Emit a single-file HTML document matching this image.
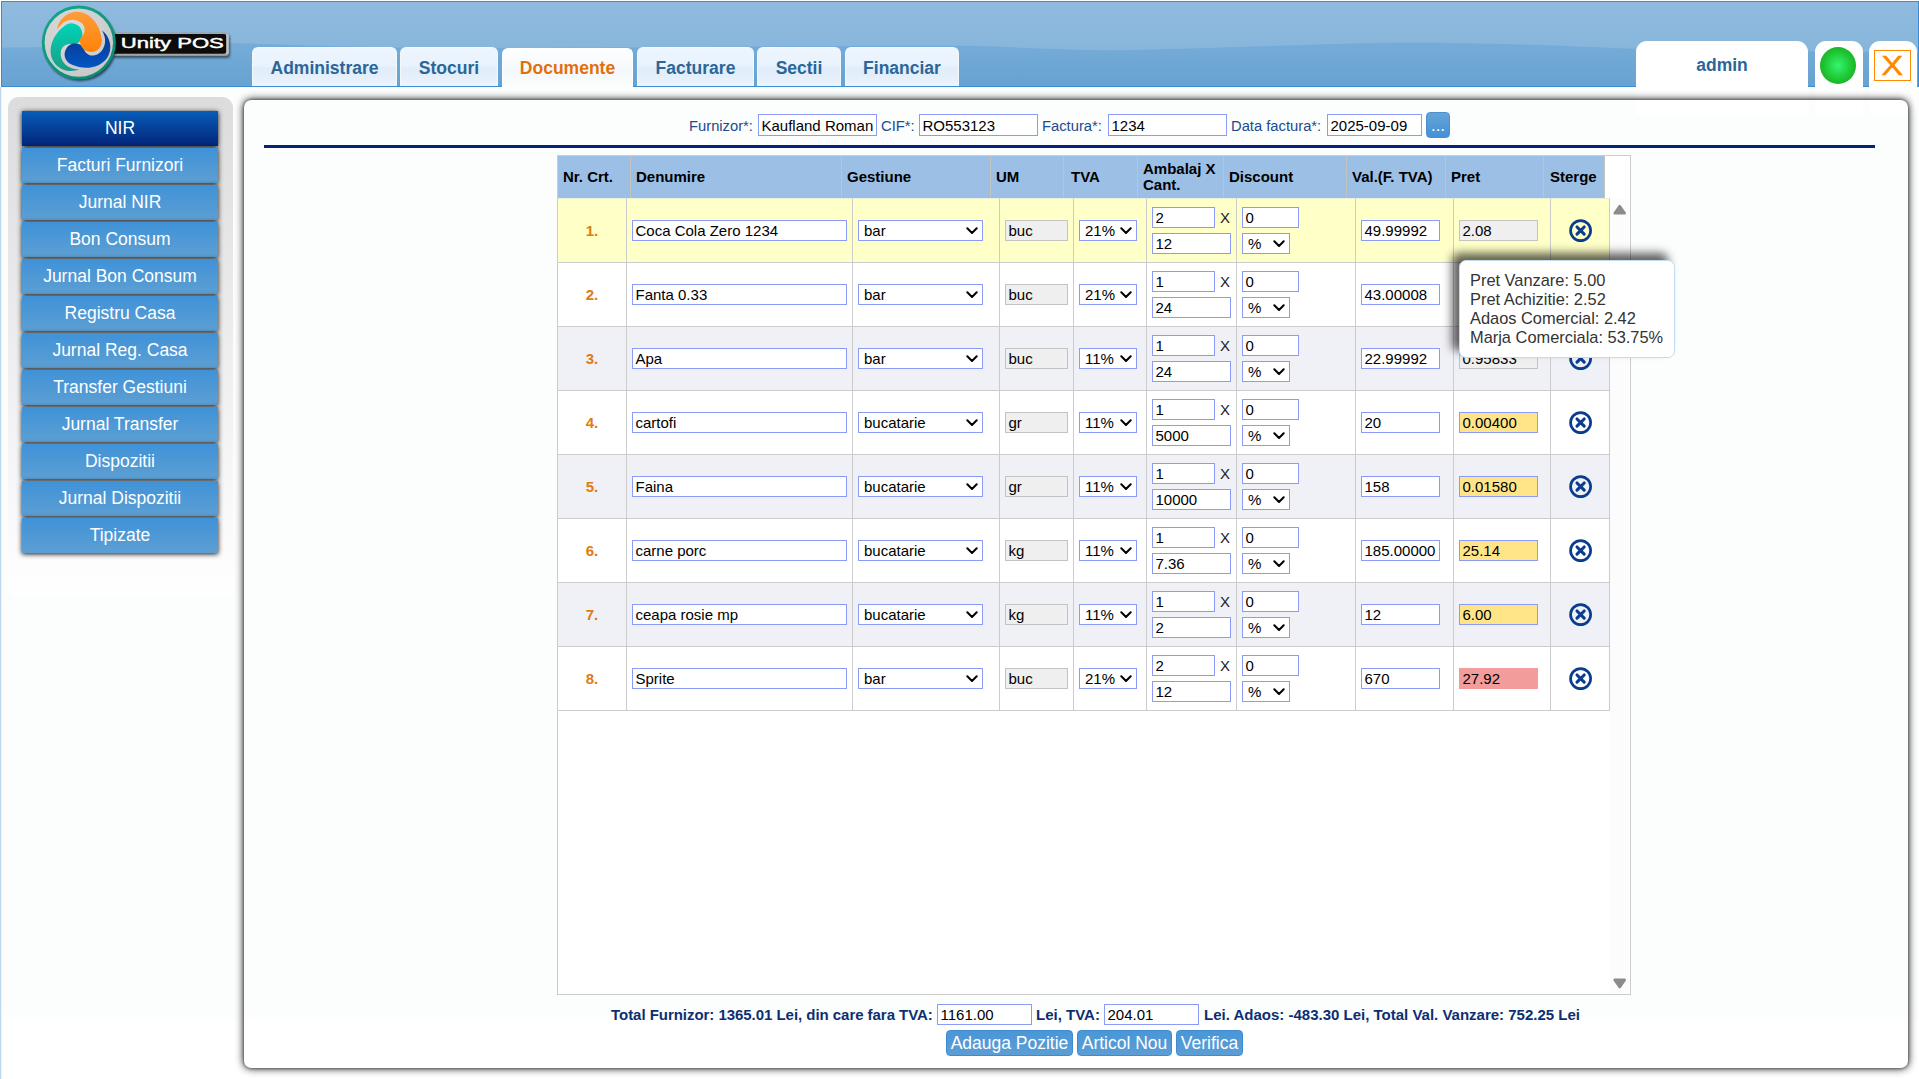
<!DOCTYPE html>
<html lang="ro">
<head>
<meta charset="utf-8">
<title>Unity POS - NIR</title>
<style>
html,body{margin:0;padding:0;}
body{width:1919px;height:1079px;overflow:hidden;position:relative;background:linear-gradient(to bottom,#fcfdfd 0,#fcfdfd 1012px,#fff 1022px);font-family:"Liberation Sans",Arial,sans-serif;font-size:15px;color:#000;}
.abs{position:absolute;}
#leftline{position:absolute;left:0;top:87px;width:2px;height:992px;background:linear-gradient(to right,#bdd7ec 0,#bdd7ec 50%,#eef5fa 50%,#eef5fa 100%);}
#hdr{position:absolute;left:1px;top:1px;width:1918px;height:86px;box-sizing:border-box;border:1px solid #3a8dd4;background:#8fbbde;overflow:hidden;}
#hdr svg.bg{position:absolute;left:0;top:0;}
.tab{position:absolute;top:47px;height:39px;box-sizing:border-box;border-radius:6px 6px 0 0;text-align:center;font-weight:bold;font-size:17.5px;line-height:40px;color:#2b6699;
 background:linear-gradient(to bottom,#edf5fd 0%,#e9f3fd 48%,#e0edfa 52%,#e4effb 75%,#edf5fd 100%);border:1px solid #f3f8fd;border-bottom:none;}
.tab.act{top:48px;height:40px;background:linear-gradient(to bottom,#fdfeff,#f5f8fb 60%,#fcfdfd);color:#e2700a;border-color:#fff;line-height:38px;}
.wbox{position:absolute;top:41px;height:74px;background:#fff;border-radius:11px 11px 0 0;}
#admin{left:1636px;width:172px;text-align:center;font-weight:bold;font-size:17.5px;color:#2b6699;line-height:49px;}
#gbox{left:1815px;width:48px;}
#xbox{left:1869px;width:47.8px;}
#gdot{position:absolute;left:1820px;top:47px;width:36px;height:37px;border-radius:50%;background:radial-gradient(ellipse at 50% 50%,#34f570 0%,#20c836 50%,#119d0f 100%);}
#xbtn{position:absolute;left:1874px;top:50px;width:37px;height:31px;box-sizing:border-box;border:1px solid #ff8a00;color:#ff8a00;font-size:27.5px;line-height:30px;text-align:center;}
#xbtn span{display:inline-block;transform:scaleX(1.19);-webkit-text-stroke:0.5px #ff8a00;}
#side{position:absolute;left:8px;top:97px;width:225px;height:500px;border-radius:11px;background:linear-gradient(to bottom,#dcdcdc 0%,#ffffff 100%);}
.sb{position:absolute;left:22px;width:196px;height:35px;line-height:34px;text-align:center;color:#fff;font-size:17.5px;background:linear-gradient(to bottom,#3f92d8,#5d9fd3);box-shadow:0 1px 5px rgba(0,0,0,.95);}
.sb.act{background:linear-gradient(to bottom,#075db8,#03257a);}
#panel{position:absolute;left:244px;top:100px;width:1664px;height:968px;border-radius:7px;box-shadow:0 0 8px #000,0 0 3px rgba(0,0,0,.45);}
.lbl{position:absolute;top:118px;line-height:17px;font-size:14.75px;color:#1d4b8f;white-space:pre;}
.inp{position:absolute;box-sizing:border-box;height:21px;border:1px solid #8c9bf7;background:#fff;padding:1px 0 0 2.5px;line-height:17px;font-size:15px;white-space:pre;overflow:hidden;color:#000;}
.inp.dis{background:#efefef;border-color:#c3c3c3;}
.btn{position:absolute;box-sizing:border-box;border-radius:4px;background:linear-gradient(to bottom,#4a96d8,#5b9ed4);color:#fff;text-align:center;border:1px solid #3f8bd0;}
#hr{position:absolute;left:264px;top:145px;width:1611px;height:3px;background:#03247a;}
#tbox{position:absolute;left:557px;top:155px;width:1074px;height:840px;box-sizing:border-box;border:1px solid #ccc;background:#fff;}
table{border-collapse:separate;border-spacing:0;table-layout:fixed;}
#th{position:absolute;left:558px;top:156px;width:1047px;height:42px;}
#th td{background:#9cbfe6;border-right:1px solid #c4c4bd;padding:0 0 0 5px;font-weight:bold;font-size:15px;line-height:16px;height:42px;box-sizing:border-box;vertical-align:middle;padding-bottom:1px;}
#tb{position:absolute;left:558px;top:198px;width:1052px;}
#tb td{padding:0;height:64px;box-sizing:border-box;border-right:1px solid #ccc;border-bottom:1px solid #ccc;position:relative;background:#fff;}
#tb tr.hl td{background:#ffffc8;}
#tb tr:first-child td{height:65px;border-top:1px solid #ecefd9;}
#tb tr.alt td{background:#f0f0f7;}
#tb td>*{position:absolute;}
td.c1{text-align:center;color:#e07b10;font-weight:bold;line-height:63px;}
.one{top:21px;}
.i-den{left:5px;top:21px;width:215px;}
.s-gest{left:5px;top:21px;width:125px;}
.i-um{left:5px;top:21px;width:63px;}
.s-tva{left:5px;top:21px;width:58px;}
.i-amb{left:5px;top:8px;width:63px;}
.i-cant{left:5px;top:34px;width:79px;}
.x{left:73px;top:10px;font-size:15px;line-height:17px;color:#222;}
.i-disc{left:5px;top:8px;width:57px;}
.s-pct{left:5px;top:34px;width:48px;}
.i-val{left:5px;top:21px;width:79px;}
.i-pret{left:5px;top:21px;width:79px;}
.i-pret.pg{background:#efefef;border-color:#c3c3c3;}
.i-pret.py{background:#ffe588;}
.i-pret.pr{background:#f29c9c;border-color:#f29c9c;}
.sel{box-sizing:border-box;height:21px;border:1px solid #8c9bf7;background:#fff;line-height:17px;padding:1px 0 0 5px;font-size:15px;}
.sel .chev{position:absolute;right:4px;top:6px;}
.del{left:17px;top:19px;}
#sbar{position:absolute;left:1610px;top:199px;width:19px;height:795px;background:#fcfcfc;}
#tip{position:absolute;left:1459px;top:260px;width:216px;height:98px;box-sizing:border-box;border:1px solid #c3dcef;border-radius:7px;background:#fff;box-shadow:-7px -7px 10px rgba(0,0,0,.62);padding:9.5px 0 0 10px;font-size:16.4px;line-height:19px;color:#333;white-space:pre;}
.ft{position:absolute;top:1006px;line-height:17px;font-size:15px;font-weight:bold;color:#0d2f72;white-space:pre;}
.inp.tp{height:22px;padding-top:2px;}
#th td:nth-child(5){padding-left:7px;}
#th td:nth-child(10){padding-left:6px;}
</style>
</head>
<body>
<div id="leftline"></div>
<div id="hdr">
<svg class="bg" width="1916" height="84" viewBox="2 2 1916 84" preserveAspectRatio="none">
<defs>
<linearGradient id="g1" x1="0" y1="0" x2="0" y2="1"><stop offset="0" stop-color="#90bbdf"/><stop offset="1" stop-color="#86b4da"/></linearGradient>
<linearGradient id="g2" x1="0" y1="0" x2="0" y2="1"><stop offset="0" stop-color="#76acd7"/><stop offset="1" stop-color="#67a2d2"/></linearGradient>
</defs>
<rect x="0" y="0" width="1919" height="60" fill="url(#g1)"/>
<path d="M0,47.6 C6.7,47.53 18.3,47.77 40,47.2 C61.7,46.63 98.0,44.85 130,44.2 C162.0,43.55 202.8,43.10 232,43.3 C261.2,43.50 277.0,44.72 305,45.4 C333.0,46.08 367.5,46.97 400,47.4 C432.5,47.83 463.3,47.98 500,48 C536.7,48.02 570.0,47.78 620,47.5 C670.0,47.22 743.3,46.58 800,46.3 C856.7,46.02 920.0,45.43 960,45.8 C1000.0,46.17 1015.0,47.75 1040,48.5 C1065.0,49.25 1085.0,50.30 1110,50.3 C1135.0,50.30 1161.7,49.25 1190,48.5 C1218.3,47.75 1253.3,46.63 1280,45.8 C1306.7,44.97 1326.0,44.05 1350,43.5 C1374.0,42.95 1395.7,42.33 1424,42.5 C1452.3,42.67 1484.0,43.42 1520,44.5 C1556.0,45.58 1605.0,47.95 1640,49 C1675.0,50.05 1701.7,50.38 1730,50.8 C1758.3,51.22 1778.5,51.30 1810,51.5 C1841.5,51.70 1900.8,51.92 1919,52 L1919,87 L0,87 Z" fill="url(#g2)"/>
</svg>
</div>
<div class="tab" style="left:252px;width:145px">Administrare</div>
<div class="tab" style="left:400px;width:98px">Stocuri</div>
<div class="tab act" style="left:502px;width:131px">Documente</div>
<div class="tab" style="left:637px;width:117px">Facturare</div>
<div class="tab" style="left:757px;width:84px">Sectii</div>
<div class="tab" style="left:845px;width:114px">Financiar</div>
<div class="wbox" id="admin">admin</div>
<div class="wbox" id="gbox"></div>
<div class="wbox" id="xbox"></div>
<div id="gdot"></div>
<div id="xbtn"><span>X</span></div>
<svg id="logo" class="abs" style="left:36px;top:0px" width="200" height="90" viewBox="0 0 200 90">
<defs>
<radialGradient id="lgd" cx="0.4" cy="0.35" r="0.75"><stop offset="0" stop-color="#dcdcdc"/><stop offset="1" stop-color="#c6c6c6"/></radialGradient>
<linearGradient id="lgo" gradientUnits="userSpaceOnUse" x1="0" y1="-30" x2="0" y2="9"><stop offset="0" stop-color="#ff9c3a"/><stop offset="1" stop-color="#ff8206"/></linearGradient>
<linearGradient id="lgt" gradientUnits="userSpaceOnUse" x1="0" y1="-20" x2="0" y2="28"><stop offset="0" stop-color="#00d6b8"/><stop offset="1" stop-color="#1b9a84"/></linearGradient>
<linearGradient id="lgb" gradientUnits="userSpaceOnUse" x1="0" y1="0" x2="0" y2="27"><stop offset="0" stop-color="#0a409a"/><stop offset="1" stop-color="#0058cc"/></linearGradient>
<linearGradient id="lgr" x1="0.2" y1="0" x2="0.8" y2="1"><stop offset="0" stop-color="#13a58c"/><stop offset="1" stop-color="#0c8a72"/></linearGradient>
<linearGradient id="lgs" x1="0" y1="0" x2="0" y2="1"><stop offset="0" stop-color="#9a9a9a"/><stop offset="0.15" stop-color="#c8c8c8"/><stop offset="0.85" stop-color="#c4c4c4"/><stop offset="1" stop-color="#8e8e8e"/></linearGradient>
<filter id="lsh" x="-20%" y="-20%" width="140%" height="140%"><feGaussianBlur stdDeviation="1.2"/></filter>
</defs>
<rect x="77" y="35" width="117" height="23" rx="3" fill="#111" opacity="0.55" filter="url(#lsh)"/>
<rect x="74" y="32.4" width="118.8" height="23.6" rx="3.5" fill="url(#lgs)"/>
<rect x="74" y="34" width="116.2" height="19.8" rx="2" fill="#0c0c0c"/>
<text x="84.8" y="48.1" font-family="Liberation Sans, Arial, sans-serif" font-size="15.2" fill="#fff" stroke="#fff" stroke-width="0.45" textLength="103" lengthAdjust="spacingAndGlyphs">Unity POS</text>
<circle cx="44.3" cy="44.8" r="36.3" fill="#0a1f2a" opacity="0.75" filter="url(#lsh)"/>
<circle cx="42.8" cy="42.6" r="35.6" fill="url(#lgd)" stroke="url(#lgr)" stroke-width="2.8"/>
<g transform="translate(43.3 43.2) scale(1.05)">
<path d="M-0.09 24.90 C-8.56 28.47 -19.53 25.74 -24.43 17.59 C-30.87 6.88 -25.73 -7.87 -14.40 -16.20 A10.4 10.4 0 1 1 -4.37 1.46 C-9.43 -0.17 -15.61 1.21 -17.40 6.96 C-19.11 13.82 -14.99 20.68 -8.32 23.43 C-5.73 24.44 -2.56 24.87 -0.09 24.90 Z" fill="url(#lgt)"/>
<path d="M21.61 -12.38 C28.94 -6.83 32.06 4.05 27.45 12.36 C21.39 23.29 6.05 26.22 -6.83 20.57 A10.4 10.4 0 1 1 3.45 3.06 C4.57 8.25 8.85 12.91 14.73 11.59 C21.52 9.64 25.40 2.65 24.45 -4.51 C24.03 -7.26 22.82 -10.22 21.61 -12.38 Z" fill="url(#lgb)"/>
<path d="M-21.30 -12.90 C-20.00 -22.00 -12.00 -30.00 -2.50 -30.00 C10.00 -30.00 20.00 -18.00 21.30 -4.00 A10.4 10.4 0 1 1 1.00 -4.50 C5.00 -8.00 7.00 -14.00 3.00 -18.50 C-2.00 -23.50 -10.00 -23.50 -15.80 -19.20 C-18.00 -17.50 -20.00 -15.00 -21.30 -12.90 Z" fill="url(#lgo)"/>
</g>
</svg>
<div id="side"></div>
<div class="sb act" style="top:111px">NIR</div>
<div class="sb" style="top:148px">Facturi Furnizori</div>
<div class="sb" style="top:185px">Jurnal NIR</div>
<div class="sb" style="top:222px">Bon Consum</div>
<div class="sb" style="top:259px">Jurnal Bon Consum</div>
<div class="sb" style="top:296px">Registru Casa</div>
<div class="sb" style="top:333px">Jurnal Reg. Casa</div>
<div class="sb" style="top:370px">Transfer Gestiuni</div>
<div class="sb" style="top:407px">Jurnal Transfer</div>
<div class="sb" style="top:444px">Dispozitii</div>
<div class="sb" style="top:481px">Jurnal Dispozitii</div>
<div class="sb" style="top:518px">Tipizate</div>
<div id="panel"></div>
<span class="lbl" style="left:689px">Furnizor*:</span>
<div class="inp tp" style="left:758px;top:114px;width:119px">Kaufland Roman</div>
<span class="lbl" style="left:881px">CIF*:</span>
<div class="inp tp" style="left:919px;top:114px;width:119px">RO553123</div>
<span class="lbl" style="left:1042px">Factura*:</span>
<div class="inp tp" style="left:1108px;top:114px;width:119px">1234</div>
<span class="lbl" style="left:1231px">Data factura*:</span>
<div class="inp tp" style="left:1327px;top:114px;width:95px">2025-09-09</div>
<div class="btn" style="left:1426px;top:112px;width:24px;height:26px;font-size:17px;line-height:25px;background:linear-gradient(to bottom,#66a4d6,#4590d6);border-color:#4a90d0">...</div>
<div id="hr"></div>
<div id="tbox"></div>
<table id="th"><colgroup><col style="width:73px"><col style="width:211px"><col style="width:149px"><col style="width:73px"><col style="width:74px"><col style="width:86px"><col style="width:123px"><col style="width:99px"><col style="width:98px"><col style="width:61px"></colgroup>
<tr><td>Nr. Crt.</td><td>Denumire</td><td>Gestiune</td><td>UM</td><td>TVA</td><td>Ambalaj X Cant.</td><td>Discount</td><td>Val.(F. TVA)</td><td>Pret</td><td>Sterge</td></tr></table>
<table id="tb"><colgroup><col style="width:69px"><col style="width:226px"><col style="width:147px"><col style="width:74px"><col style="width:73px"><col style="width:90px"><col style="width:119px"><col style="width:98px"><col style="width:97px"><col style="width:59px"></colgroup>
<tr class="hl">
<td class="c1">1.</td>
<td class="c2"><div class="inp i-den">Coca Cola Zero 1234</div></td>
<td class="c3"><div class="sel s-gest"><span>bar</span><svg class="chev" viewBox="0 0 12 8" width="12" height="8"><path d="M1.3 1.3 L6 6 L10.7 1.3" fill="none" stroke="#000" stroke-width="2" stroke-linecap="round" stroke-linejoin="round"/></svg></div></td>
<td class="c4"><div class="inp dis i-um">buc</div></td>
<td class="c5"><div class="sel s-tva"><span>21%</span><svg class="chev" viewBox="0 0 12 8" width="12" height="8"><path d="M1.3 1.3 L6 6 L10.7 1.3" fill="none" stroke="#000" stroke-width="2" stroke-linecap="round" stroke-linejoin="round"/></svg></div></td>
<td class="c6"><div class="inp i-amb">2</div><span class="x">X</span><div class="inp i-cant">12</div></td>
<td class="c7"><div class="inp i-disc">0</div><div class="sel s-pct"><span>%</span><svg class="chev" viewBox="0 0 12 8" width="12" height="8"><path d="M1.3 1.3 L6 6 L10.7 1.3" fill="none" stroke="#000" stroke-width="2" stroke-linecap="round" stroke-linejoin="round"/></svg></div></td>
<td class="c8"><div class="inp i-val">49.99992</div></td>
<td class="c9"><div class="inp i-pret pg">2.08</div></td>
<td class="c10"><svg class="del" viewBox="0 0 26 26" width="26" height="26"><circle cx="12.6" cy="12.6" r="10.05" fill="none" stroke="#0a3d8f" stroke-width="2.7"/><path d="M9 9 L16.2 16.2 M16.2 9 L9 16.2" stroke="#0a3d8f" stroke-width="3.1" stroke-linecap="round"/></svg></td>
</tr>
<tr class="">
<td class="c1">2.</td>
<td class="c2"><div class="inp i-den">Fanta 0.33</div></td>
<td class="c3"><div class="sel s-gest"><span>bar</span><svg class="chev" viewBox="0 0 12 8" width="12" height="8"><path d="M1.3 1.3 L6 6 L10.7 1.3" fill="none" stroke="#000" stroke-width="2" stroke-linecap="round" stroke-linejoin="round"/></svg></div></td>
<td class="c4"><div class="inp dis i-um">buc</div></td>
<td class="c5"><div class="sel s-tva"><span>21%</span><svg class="chev" viewBox="0 0 12 8" width="12" height="8"><path d="M1.3 1.3 L6 6 L10.7 1.3" fill="none" stroke="#000" stroke-width="2" stroke-linecap="round" stroke-linejoin="round"/></svg></div></td>
<td class="c6"><div class="inp i-amb">1</div><span class="x">X</span><div class="inp i-cant">24</div></td>
<td class="c7"><div class="inp i-disc">0</div><div class="sel s-pct"><span>%</span><svg class="chev" viewBox="0 0 12 8" width="12" height="8"><path d="M1.3 1.3 L6 6 L10.7 1.3" fill="none" stroke="#000" stroke-width="2" stroke-linecap="round" stroke-linejoin="round"/></svg></div></td>
<td class="c8"><div class="inp i-val">43.00008</div></td>
<td class="c9"><div class="inp i-pret pg">2.52</div></td>
<td class="c10"><svg class="del" viewBox="0 0 26 26" width="26" height="26"><circle cx="12.6" cy="12.6" r="10.05" fill="none" stroke="#0a3d8f" stroke-width="2.7"/><path d="M9 9 L16.2 16.2 M16.2 9 L9 16.2" stroke="#0a3d8f" stroke-width="3.1" stroke-linecap="round"/></svg></td>
</tr>
<tr class="alt">
<td class="c1">3.</td>
<td class="c2"><div class="inp i-den">Apa</div></td>
<td class="c3"><div class="sel s-gest"><span>bar</span><svg class="chev" viewBox="0 0 12 8" width="12" height="8"><path d="M1.3 1.3 L6 6 L10.7 1.3" fill="none" stroke="#000" stroke-width="2" stroke-linecap="round" stroke-linejoin="round"/></svg></div></td>
<td class="c4"><div class="inp dis i-um">buc</div></td>
<td class="c5"><div class="sel s-tva"><span>11%</span><svg class="chev" viewBox="0 0 12 8" width="12" height="8"><path d="M1.3 1.3 L6 6 L10.7 1.3" fill="none" stroke="#000" stroke-width="2" stroke-linecap="round" stroke-linejoin="round"/></svg></div></td>
<td class="c6"><div class="inp i-amb">1</div><span class="x">X</span><div class="inp i-cant">24</div></td>
<td class="c7"><div class="inp i-disc">0</div><div class="sel s-pct"><span>%</span><svg class="chev" viewBox="0 0 12 8" width="12" height="8"><path d="M1.3 1.3 L6 6 L10.7 1.3" fill="none" stroke="#000" stroke-width="2" stroke-linecap="round" stroke-linejoin="round"/></svg></div></td>
<td class="c8"><div class="inp i-val">22.99992</div></td>
<td class="c9"><div class="inp i-pret pg">0.95833</div></td>
<td class="c10"><svg class="del" viewBox="0 0 26 26" width="26" height="26"><circle cx="12.6" cy="12.6" r="10.05" fill="none" stroke="#0a3d8f" stroke-width="2.7"/><path d="M9 9 L16.2 16.2 M16.2 9 L9 16.2" stroke="#0a3d8f" stroke-width="3.1" stroke-linecap="round"/></svg></td>
</tr>
<tr class="">
<td class="c1">4.</td>
<td class="c2"><div class="inp i-den">cartofi</div></td>
<td class="c3"><div class="sel s-gest"><span>bucatarie</span><svg class="chev" viewBox="0 0 12 8" width="12" height="8"><path d="M1.3 1.3 L6 6 L10.7 1.3" fill="none" stroke="#000" stroke-width="2" stroke-linecap="round" stroke-linejoin="round"/></svg></div></td>
<td class="c4"><div class="inp dis i-um">gr</div></td>
<td class="c5"><div class="sel s-tva"><span>11%</span><svg class="chev" viewBox="0 0 12 8" width="12" height="8"><path d="M1.3 1.3 L6 6 L10.7 1.3" fill="none" stroke="#000" stroke-width="2" stroke-linecap="round" stroke-linejoin="round"/></svg></div></td>
<td class="c6"><div class="inp i-amb">1</div><span class="x">X</span><div class="inp i-cant">5000</div></td>
<td class="c7"><div class="inp i-disc">0</div><div class="sel s-pct"><span>%</span><svg class="chev" viewBox="0 0 12 8" width="12" height="8"><path d="M1.3 1.3 L6 6 L10.7 1.3" fill="none" stroke="#000" stroke-width="2" stroke-linecap="round" stroke-linejoin="round"/></svg></div></td>
<td class="c8"><div class="inp i-val">20</div></td>
<td class="c9"><div class="inp i-pret py">0.00400</div></td>
<td class="c10"><svg class="del" viewBox="0 0 26 26" width="26" height="26"><circle cx="12.6" cy="12.6" r="10.05" fill="none" stroke="#0a3d8f" stroke-width="2.7"/><path d="M9 9 L16.2 16.2 M16.2 9 L9 16.2" stroke="#0a3d8f" stroke-width="3.1" stroke-linecap="round"/></svg></td>
</tr>
<tr class="alt">
<td class="c1">5.</td>
<td class="c2"><div class="inp i-den">Faina</div></td>
<td class="c3"><div class="sel s-gest"><span>bucatarie</span><svg class="chev" viewBox="0 0 12 8" width="12" height="8"><path d="M1.3 1.3 L6 6 L10.7 1.3" fill="none" stroke="#000" stroke-width="2" stroke-linecap="round" stroke-linejoin="round"/></svg></div></td>
<td class="c4"><div class="inp dis i-um">gr</div></td>
<td class="c5"><div class="sel s-tva"><span>11%</span><svg class="chev" viewBox="0 0 12 8" width="12" height="8"><path d="M1.3 1.3 L6 6 L10.7 1.3" fill="none" stroke="#000" stroke-width="2" stroke-linecap="round" stroke-linejoin="round"/></svg></div></td>
<td class="c6"><div class="inp i-amb">1</div><span class="x">X</span><div class="inp i-cant">10000</div></td>
<td class="c7"><div class="inp i-disc">0</div><div class="sel s-pct"><span>%</span><svg class="chev" viewBox="0 0 12 8" width="12" height="8"><path d="M1.3 1.3 L6 6 L10.7 1.3" fill="none" stroke="#000" stroke-width="2" stroke-linecap="round" stroke-linejoin="round"/></svg></div></td>
<td class="c8"><div class="inp i-val">158</div></td>
<td class="c9"><div class="inp i-pret py">0.01580</div></td>
<td class="c10"><svg class="del" viewBox="0 0 26 26" width="26" height="26"><circle cx="12.6" cy="12.6" r="10.05" fill="none" stroke="#0a3d8f" stroke-width="2.7"/><path d="M9 9 L16.2 16.2 M16.2 9 L9 16.2" stroke="#0a3d8f" stroke-width="3.1" stroke-linecap="round"/></svg></td>
</tr>
<tr class="">
<td class="c1">6.</td>
<td class="c2"><div class="inp i-den">carne porc</div></td>
<td class="c3"><div class="sel s-gest"><span>bucatarie</span><svg class="chev" viewBox="0 0 12 8" width="12" height="8"><path d="M1.3 1.3 L6 6 L10.7 1.3" fill="none" stroke="#000" stroke-width="2" stroke-linecap="round" stroke-linejoin="round"/></svg></div></td>
<td class="c4"><div class="inp dis i-um">kg</div></td>
<td class="c5"><div class="sel s-tva"><span>11%</span><svg class="chev" viewBox="0 0 12 8" width="12" height="8"><path d="M1.3 1.3 L6 6 L10.7 1.3" fill="none" stroke="#000" stroke-width="2" stroke-linecap="round" stroke-linejoin="round"/></svg></div></td>
<td class="c6"><div class="inp i-amb">1</div><span class="x">X</span><div class="inp i-cant">7.36</div></td>
<td class="c7"><div class="inp i-disc">0</div><div class="sel s-pct"><span>%</span><svg class="chev" viewBox="0 0 12 8" width="12" height="8"><path d="M1.3 1.3 L6 6 L10.7 1.3" fill="none" stroke="#000" stroke-width="2" stroke-linecap="round" stroke-linejoin="round"/></svg></div></td>
<td class="c8"><div class="inp i-val">185.00000</div></td>
<td class="c9"><div class="inp i-pret py">25.14</div></td>
<td class="c10"><svg class="del" viewBox="0 0 26 26" width="26" height="26"><circle cx="12.6" cy="12.6" r="10.05" fill="none" stroke="#0a3d8f" stroke-width="2.7"/><path d="M9 9 L16.2 16.2 M16.2 9 L9 16.2" stroke="#0a3d8f" stroke-width="3.1" stroke-linecap="round"/></svg></td>
</tr>
<tr class="alt">
<td class="c1">7.</td>
<td class="c2"><div class="inp i-den">ceapa rosie mp</div></td>
<td class="c3"><div class="sel s-gest"><span>bucatarie</span><svg class="chev" viewBox="0 0 12 8" width="12" height="8"><path d="M1.3 1.3 L6 6 L10.7 1.3" fill="none" stroke="#000" stroke-width="2" stroke-linecap="round" stroke-linejoin="round"/></svg></div></td>
<td class="c4"><div class="inp dis i-um">kg</div></td>
<td class="c5"><div class="sel s-tva"><span>11%</span><svg class="chev" viewBox="0 0 12 8" width="12" height="8"><path d="M1.3 1.3 L6 6 L10.7 1.3" fill="none" stroke="#000" stroke-width="2" stroke-linecap="round" stroke-linejoin="round"/></svg></div></td>
<td class="c6"><div class="inp i-amb">1</div><span class="x">X</span><div class="inp i-cant">2</div></td>
<td class="c7"><div class="inp i-disc">0</div><div class="sel s-pct"><span>%</span><svg class="chev" viewBox="0 0 12 8" width="12" height="8"><path d="M1.3 1.3 L6 6 L10.7 1.3" fill="none" stroke="#000" stroke-width="2" stroke-linecap="round" stroke-linejoin="round"/></svg></div></td>
<td class="c8"><div class="inp i-val">12</div></td>
<td class="c9"><div class="inp i-pret py">6.00</div></td>
<td class="c10"><svg class="del" viewBox="0 0 26 26" width="26" height="26"><circle cx="12.6" cy="12.6" r="10.05" fill="none" stroke="#0a3d8f" stroke-width="2.7"/><path d="M9 9 L16.2 16.2 M16.2 9 L9 16.2" stroke="#0a3d8f" stroke-width="3.1" stroke-linecap="round"/></svg></td>
</tr>
<tr class="">
<td class="c1">8.</td>
<td class="c2"><div class="inp i-den">Sprite</div></td>
<td class="c3"><div class="sel s-gest"><span>bar</span><svg class="chev" viewBox="0 0 12 8" width="12" height="8"><path d="M1.3 1.3 L6 6 L10.7 1.3" fill="none" stroke="#000" stroke-width="2" stroke-linecap="round" stroke-linejoin="round"/></svg></div></td>
<td class="c4"><div class="inp dis i-um">buc</div></td>
<td class="c5"><div class="sel s-tva"><span>21%</span><svg class="chev" viewBox="0 0 12 8" width="12" height="8"><path d="M1.3 1.3 L6 6 L10.7 1.3" fill="none" stroke="#000" stroke-width="2" stroke-linecap="round" stroke-linejoin="round"/></svg></div></td>
<td class="c6"><div class="inp i-amb">2</div><span class="x">X</span><div class="inp i-cant">12</div></td>
<td class="c7"><div class="inp i-disc">0</div><div class="sel s-pct"><span>%</span><svg class="chev" viewBox="0 0 12 8" width="12" height="8"><path d="M1.3 1.3 L6 6 L10.7 1.3" fill="none" stroke="#000" stroke-width="2" stroke-linecap="round" stroke-linejoin="round"/></svg></div></td>
<td class="c8"><div class="inp i-val">670</div></td>
<td class="c9"><div class="inp i-pret pr">27.92</div></td>
<td class="c10"><svg class="del" viewBox="0 0 26 26" width="26" height="26"><circle cx="12.6" cy="12.6" r="10.05" fill="none" stroke="#0a3d8f" stroke-width="2.7"/><path d="M9 9 L16.2 16.2 M16.2 9 L9 16.2" stroke="#0a3d8f" stroke-width="3.1" stroke-linecap="round"/></svg></td>
</tr>
</table>
<div id="sbar">
<svg class="abs" style="left:3px;top:5px" width="14" height="11" viewBox="0 0 14 11"><path d="M6.7 2.3 L11.6 9.2 L1.8 9.2 Z" fill="#8b8b8b" stroke="#8b8b8b" stroke-width="2.8" stroke-linejoin="round"/></svg>
<svg class="abs" style="left:3px;top:779px" width="14" height="11" viewBox="0 0 14 11"><path d="M6.7 8.9 L11.6 2 L1.8 2 Z" fill="#8b8b8b" stroke="#8b8b8b" stroke-width="2.8" stroke-linejoin="round"/></svg>
</div>
<div id="tip">Pret Vanzare: 5.00
Pret Achizitie: 2.52
Adaos Comercial: 2.42
Marja Comerciala: 53.75%</div>
<span class="ft" style="left:611px;letter-spacing:-0.04px">Total Furnizor: 1365.01 Lei, din care fara TVA:</span>
<div class="inp" style="left:937px;top:1004px;width:95px">1161.00</div>
<span class="ft" style="left:1036px">Lei, TVA:</span>
<div class="inp" style="left:1104px;top:1004px;width:95px">204.01</div>
<span class="ft" style="left:1204px">Lei. Adaos: -483.30 Lei, Total Val. Vanzare: 752.25 Lei</span>
<div class="btn" style="left:946px;top:1030px;width:127px;height:26px;font-size:17.5px;line-height:24px">Adauga Pozitie</div>
<div class="btn" style="left:1077px;top:1030px;width:95px;height:26px;font-size:17.5px;line-height:24px">Articol Nou</div>
<div class="btn" style="left:1176px;top:1030px;width:67px;height:26px;font-size:17.5px;line-height:24px">Verifica</div>
</body>
</html>
